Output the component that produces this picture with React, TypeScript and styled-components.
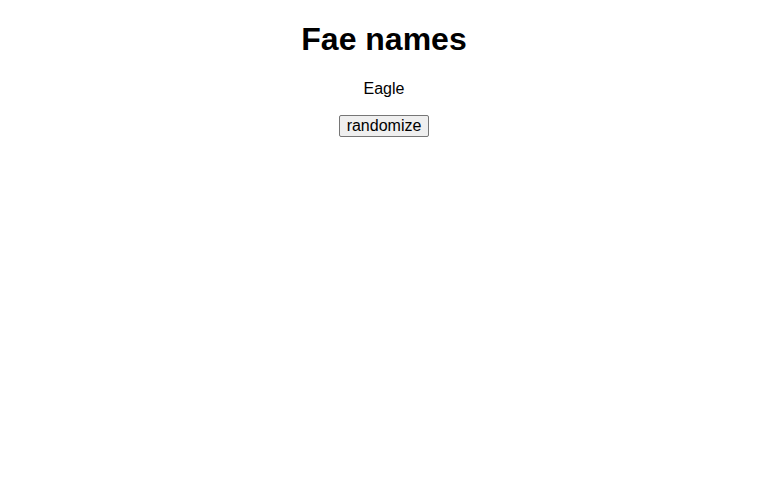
import {useState} from 'react'
import styled, {createGlobalStyle} from "styled-components";

const GlobalStyle = createGlobalStyle`
    body {
        margin: 0 8px;
        background: #ffffff;
        color: #000000;
        font-family: "Liberation Sans", Arial, sans-serif;
    }
`

const Page = styled.div`
    text-align: center;
`

const Title = styled.h1`
    font-size: 32px;
    font-weight: bold;
    margin: 21px 0 22px;
`

const Name = styled.p`
    font-size: 16px;
    margin: 16px 0 17px;
`

const RandomButton = styled.button`
    font-family: "Liberation Sans", Arial, sans-serif;
    font-size: 16px;
    color: #000000;
    background: #efefef;
    border: 1px solid #767676;
    border-radius: 2px;
    padding: 1px 7px;
    line-height: normal;
    cursor: pointer;
`

const names = ["Eagle", "Willow", "Thistle", "Moonbeam", "Bramble", "Fern"]

function App() {
    const [name, setName] = useState("Eagle")

    return (
        <>
            <GlobalStyle/>
            <Page>
                <Title>Fae names</Title>
                <Name>{name}</Name>
                <div>
                    <RandomButton onClick={() => setName(names[Math.floor(Math.random() * names.length)])}>
                        randomize
                    </RandomButton>
                </div>
            </Page>
        </>
    )
}

export default App
